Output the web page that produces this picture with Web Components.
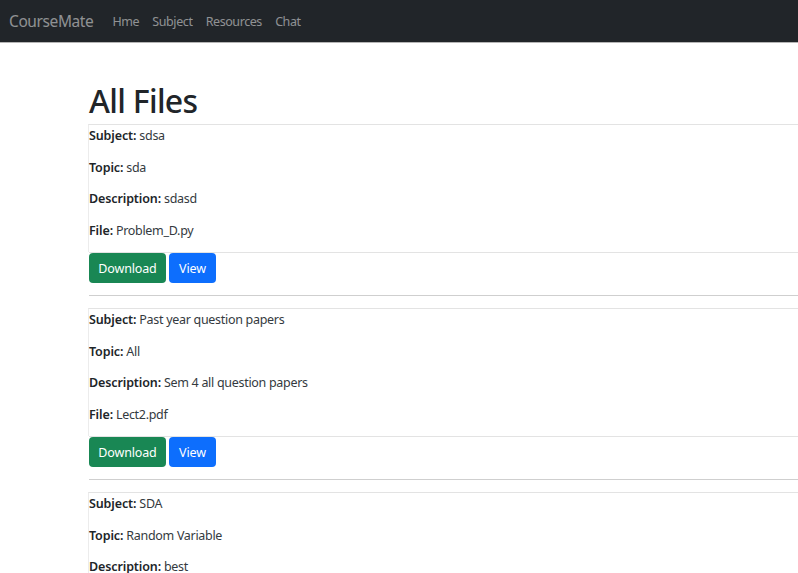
<!DOCTYPE html>
<html>
<head>
<meta charset="utf-8">
<title>CourseMate</title>
<style>
  html, body { margin: 0; padding: 0; overflow: hidden; height: 573px; background: #fff; }
  body { font-family: "Noto Sans", sans-serif; color: #212529; }
</style>
</head>
<body>
<app-navbar brand="CourseMate">
  <nav-link>Hme</nav-link>
  <nav-link>Subject</nav-link>
  <nav-link>Resources</nav-link>
  <nav-link>Chat</nav-link>
</app-navbar>
<file-list heading="All Files">
  <file-card subject="sdsa" topic="sda" description="sdasd" file="Problem_D.py"></file-card>
  <file-card subject="Past year question papers" topic="All" description="Sem 4 all question papers" file="Lect2.pdf"></file-card>
  <file-card subject="SDA" topic="Random Variable" description="best"></file-card>
</file-list>
<script>
class AppNavbar extends HTMLElement {
  constructor() {
    super();
    this.attachShadow({ mode: 'open' }).innerHTML = `
      <style>
        :host { display: flex; align-items: center; height: 42px; background: #212529; padding-left: 9px; border-bottom: 1px solid #b5b5b5; }
        .brand { font-size: 15.5px; letter-spacing: -.4px; color: rgba(255,255,255,.5); margin-right: 19px; }
        .links { display: flex; gap: 13.2px; }
      </style>
      <span class="brand"></span>
      <div class="links"><slot></slot></div>`;
    this.shadowRoot.querySelector('.brand').textContent = this.getAttribute('brand');
  }
}
class NavLink extends HTMLElement {
  constructor() {
    super();
    this.attachShadow({ mode: 'open' }).innerHTML = `
      <style>:host { display: block; font-size: 12.5px; letter-spacing: -.42px; color: rgba(255,255,255,.5); }</style>
      <slot></slot>`;
  }
}
class FileList extends HTMLElement {
  constructor() {
    super();
    this.attachShadow({ mode: 'open' }).innerHTML = `
      <style>
        :host { display: block; padding: 36px 0 0 88px; }
        h1 { margin: 0 0 1px 1px; font-size: 32px; font-weight: 500; letter-spacing: -.7px; line-height: 44px; color: #212529; }
      </style>
      <h1></h1>
      <slot></slot>`;
    this.shadowRoot.querySelector('h1').textContent = this.getAttribute('heading');
  }
}
class FileCard extends HTMLElement {
  constructor() {
    super();
    const row = (label, key) => `<div class="row"><b>${label}:</b> ${this.getAttribute(key)}</div>`;
    const hasFile = this.hasAttribute('file');
    this.attachShadow({ mode: 'open' }).innerHTML = `
      <style>
        :host { display: block; font-size: 12.5px; letter-spacing: -.3px; color: #343a40; }
        b { color: #212529; font-weight: 600; letter-spacing: -.12px; }
        .rows { border-top: 1px solid #e3e3e3; border-left: 1px solid #ececec; padding-top: .2px; }
        .row { height: 31.6px; line-height: 21px; }
        .actions { display: flex; gap: 3px; margin-left: 1px; border-top: 1px solid #e3e3e3; padding-bottom: 12.4px; }
        button { font: inherit; font-size: 12.5px; letter-spacing: -.15px; color: #fff; border: 0; border-radius: 4px; height: 30px; padding: 1px 0 0; }
        .dl { width: 77px; background: #198754; }
        .vw { width: 47px; background: #0d6efd; }
        hr { margin: 0 0 12px 1px; border: 0; border-top: 1px solid #cfcfcf; }
      </style>
      <div class="rows">
        ${row('Subject', 'subject')}
        ${row('Topic', 'topic')}
        ${row('Description', 'description')}
        ${hasFile ? row('File', 'file') : ''}
      </div>
      ${hasFile ? `<div class="actions"><button class="dl">Download</button><button class="vw">View</button></div><hr>` : ''}`;
  }
}
customElements.define('app-navbar', AppNavbar);
customElements.define('nav-link', NavLink);
customElements.define('file-list', FileList);
customElements.define('file-card', FileCard);
</script>
</body>
</html>
